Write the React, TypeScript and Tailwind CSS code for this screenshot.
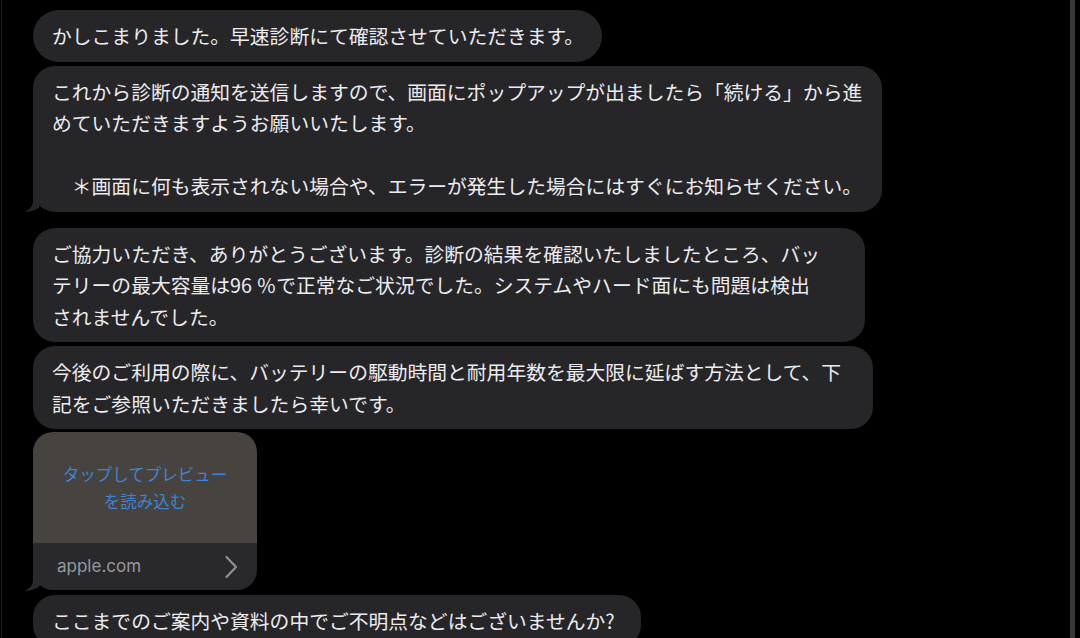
import React from "react";

const font = { fontFamily: '"Noto Sans CJK JP", "Noto Sans", sans-serif' };

function Tail({ color }: { color: string }) {
  return (
    <svg
      width="26"
      height="22"
      viewBox="0 0 26 22"
      className="absolute left-[-9px] bottom-[-0.5px]"
      fill="none"
    >
      <path
        d="M9 0 L9 11 C9 16 6 19.5 0.5 21.6 C6 22 11 20.6 15.5 17.2 L15.5 0 Z"
        fill={color}
      />
    </svg>
  );
}

function Bubble({
  children,
  className = "",
  tail = false,
}: {
  children: React.ReactNode;
  className?: string;
  tail?: boolean;
}) {
  return (
    <div
      className={`relative bg-[#262628] rounded-[22px] pl-[19px] pr-[12px] py-[10px] text-[19.8px] leading-[31.5px] text-[#ececf0] whitespace-nowrap ${className}`}
    >
      {children}
      {tail && <Tail color="#262628" />}
    </div>
  );
}

function LinkCard() {
  return (
    <div className="relative w-[224px] mt-[3px]">
      <div className="rounded-[20px] overflow-hidden">
        <div className="h-[111px] bg-[#47433e] flex flex-col items-center justify-center text-[16.5px] leading-[27px] text-[#3d84d6]">
          <span>タップしてプレビュー</span>
          <span>を読み込む</span>
        </div>
        <div className="h-[47px] bg-[#29292b] flex items-center justify-between pl-[24px] pr-[19px]">
          <span className="text-[17px] text-[#98989e]" style={{ fontFamily: '"Inter", "Noto Sans", sans-serif' }}>
            apple.com
          </span>
          <svg width="14" height="24" viewBox="0 0 14 24" fill="none">
            <path d="M2.5 2 L12 12 L2.5 22" stroke="#8e8e93" strokeWidth="2.2" strokeLinecap="round" strokeLinejoin="round" />
          </svg>
        </div>
      </div>
      <Tail color="#29292b" />
    </div>
  );
}

export default function App() {
  return (
    <div className="w-[1080px] h-[638px] bg-black overflow-hidden flex" style={font}>
      <div className="w-[1px] ml-[1px] h-full bg-[#1d1d1f]" />
      <div className="flex-1 flex flex-col items-start pl-[31px] pt-[10px]">
        <Bubble className="w-[569px] rounded-full">
          かしこまりました。早速診断にて確認させていただきます。
        </Bubble>
        <Bubble className="w-[849px] mt-[4px]" tail>
          これから診断の通知を送信しますので、画面にポップアップが出ましたら「続ける」から進
          <br />
          めていただきますようお願いいたします。
          <br />
          <br />
          {"\u3000＊画面に何も表示されない場合や、エラーが発生した場合にはすぐにお知らせください。"}
        </Bubble>
        <Bubble className="w-[832px] mt-[16px]">
          ご協力いただき、ありがとうございます。診断の結果を確認いたしましたところ、バッ
          <br />
          テリーの最大容量は96 ％で正常なご状況でした。システムやハード面にも問題は検出
          <br />
          されませんでした。
        </Bubble>
        <Bubble className="w-[840px] mt-[4px]">
          今後のご利用の際に、バッテリーの駆動時間と耐用年数を最大限に延ばす方法として、下
          <br />
          記をご参照いただきましたら幸いです。
        </Bubble>
        <LinkCard />
        <Bubble className="w-[608px] mt-[5px]">
          ここまでのご案内や資料の中でご不明点などはございませんか?
        </Bubble>
      </div>
      <div className="w-[5px] h-full bg-[#383838] mr-[5px]" />
    </div>
  );
}
